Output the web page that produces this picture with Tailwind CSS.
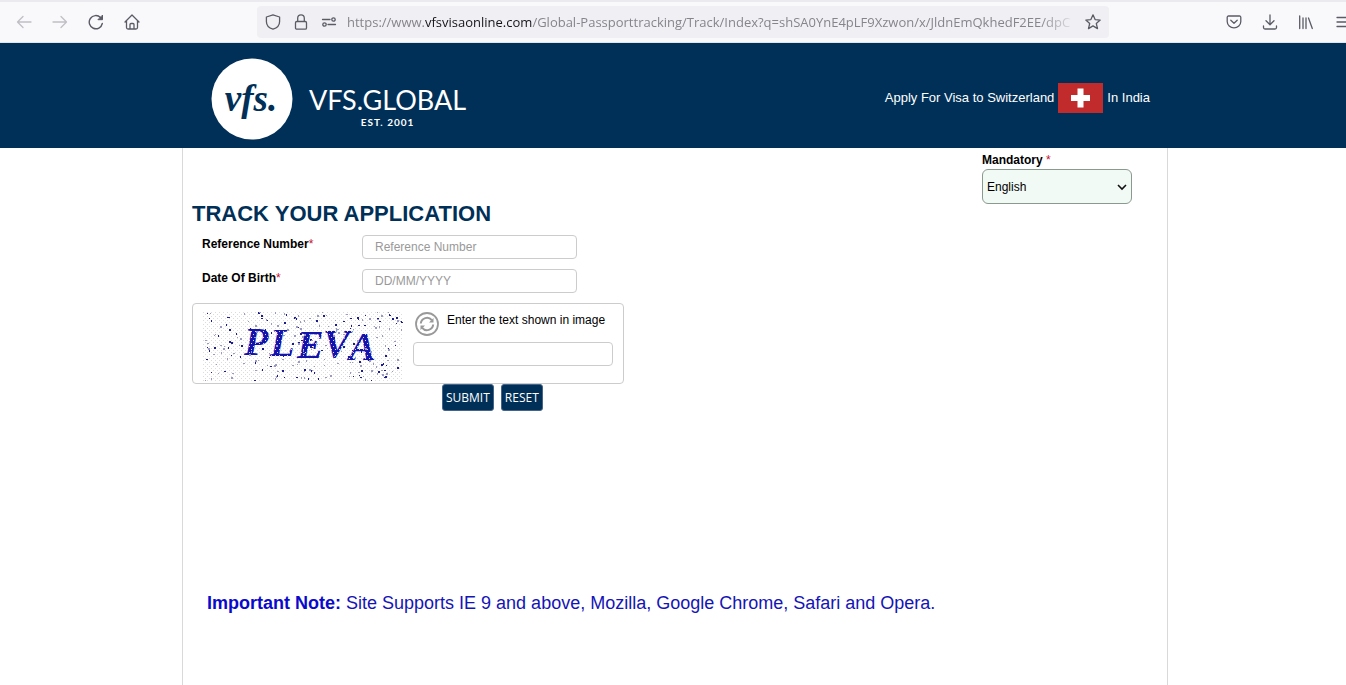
<!DOCTYPE html>
<html lang="en">
<head>
<meta charset="utf-8">
<meta name="viewport" content="width=device-width, initial-scale=1">
<title>Track Your Application</title>
<script src="https://cdn.jsdelivr.net/npm/@tailwindcss/browser@4"></script>
</head>
<body class="flex min-h-screen flex-col overflow-x-hidden bg-white font-['Liberation_Sans',Arial,sans-serif] text-xs text-black">

<nav aria-label="Browser toolbar" class="flex h-[43px] shrink-0 items-center overflow-hidden border-t-2 border-b border-t-[#ebebef] border-b-[#dfe6ee] bg-[#f9f9fb] pl-4 text-[#5b5b66]">
  <div class="flex w-[241px] shrink-0 items-center gap-5">
    <button type="button" aria-label="Back" class="text-[#bfbfc5]"><svg class="size-4" viewBox="0 0 16 16" fill="none" stroke="currentColor" stroke-width="1.3" stroke-linecap="round" stroke-linejoin="round"><path d="M15 8H1.5M7 2.5 1.5 8 7 13.500"/></svg></button>
    <button type="button" aria-label="Forward" class="text-[#bfbfc5]"><svg class="size-4" viewBox="0 0 16 16" fill="none" stroke="currentColor" stroke-width="1.3" stroke-linecap="round" stroke-linejoin="round"><path d="M1 8h13.500M9 2.500 14.500 8 9 13.500"/></svg></button>
    <button type="button" aria-label="Reload"><svg class="size-4" viewBox="0 0 16 16" fill="none" stroke="currentColor" stroke-width="1.4" stroke-linecap="round" stroke-linejoin="round"><path d="M14.300 9.500A6.600 6.600 0 1 1 12.500 3.500l1 1"/><path d="M14.500 1.500v4.200h-4.200z" fill="currentColor" stroke-width="1"/></svg></button>
    <button type="button" aria-label="Home"><svg class="size-4" viewBox="0 0 16 16" fill="none" stroke="currentColor" stroke-width="1.3" stroke-linecap="round" stroke-linejoin="round"><path d="M1 8 8 1l7 7M2.500 7v6.500a1.500 1.500 0 0 0 1.500 1.500h8a1.500 1.500 0 0 0 1.500-1.500V7M6 15v-4.500a1 1 0 0 1 1-1h2a1 1 0 0 1 1 1V15"/></svg></button>
  </div>
  <div class="flex h-8 min-w-0 grow items-center rounded bg-[#f0f0f4] px-2">
    <svg class="size-4 shrink-0" viewBox="0 0 16 16" fill="none" stroke="currentColor" stroke-width="1.3" stroke-linejoin="round"><path d="M8 .8 14.600 3v4.500c0 3.500-2.600 6.500-6.600 7.700-4-1.200-6.600-4.200-6.600-7.700V3z"/></svg>
    <svg class="ml-3 size-4 shrink-0" viewBox="0 0 16 16" fill="none" stroke="currentColor" stroke-width="1.3"><rect x="2.500" y="7.500" width="11" height="7.700" rx="1.300"/><path d="M4.700 7.500V4.200a3.300 3.300 0 0 1 6.600 0v3.300"/></svg>
    <svg class="ml-3 size-4 shrink-0" viewBox="0 0 16 16" fill="none" stroke="currentColor" stroke-width="1.300" stroke-linecap="round"><path d="M1.500 5.500H9M7 10.500h7.500"/><circle cx="12.500" cy="5.500" r="1.700"/><circle cx="3.500" cy="10.500" r="1.700"/></svg>
    <div class="ml-[10px] min-w-0 grow overflow-hidden mask-r-from-95% font-['Open_Sans','Noto_Sans',sans-serif] text-[13px] leading-5 whitespace-nowrap text-[#85858c]">https://www.<span class="text-[#15141a]">vfsvisaonline.com</span>/Global-Passporttracking/Track/Index?q=shSA0YnE4pLF9Xzwon/x/JldnEmQkhedF2EE/dpC</div>
    <button type="button" aria-label="Bookmark this page" class="ml-2 shrink-0"><svg class="size-4" viewBox="0 0 16 16" fill="none" stroke="currentColor" stroke-width="1.3" stroke-linejoin="round"><path d="m8 .8 2.100 4.800 5.100.5-3.900 3.400 1.200 5.100L8 11.900l-4.500 2.700 1.200-5.100L.8 6.100l5.100-.5z"/></svg></button>
  </div>
  <div class="-mr-1 ml-[117px] flex shrink-0 gap-5">
    <button type="button" aria-label="Save to Pocket"><svg class="size-4" viewBox="0 0 16 16" fill="none" stroke="currentColor" stroke-width="1.3" stroke-linecap="round" stroke-linejoin="round"><path d="M2.500 2h11a1.300 1.300 0 0 1 1.300 1.300V7.500a6.800 6.300 0 0 1-13.600 0V3.300A1.300 1.300 0 0 1 2.500 2zM4.800 6.300 8 9.300l3.200-3"/></svg></button>
    <button type="button" aria-label="Downloads"><svg class="size-4" viewBox="0 0 16 16" fill="none" stroke="currentColor" stroke-width="1.3" stroke-linecap="round" stroke-linejoin="round"><path d="M8 1v9.500M4 6.800l4 3.900 4-3.900M1.500 12v1.500A1.500 1.500 0 0 0 3 15h10a1.500 1.500 0 0 0 1.500-1.500V12"/></svg></button>
    <button type="button" aria-label="Library"><svg class="size-4" viewBox="0 0 16 16" fill="none" stroke="currentColor" stroke-width="1.3" stroke-linecap="round"><path d="M1.700 2v12.500M5 4v10.500M8 4v10.500M10.500 4l3.800 10.500"/></svg></button>
    <button type="button" aria-label="Menu"><svg class="size-4" viewBox="0 0 16 16" fill="none" stroke="currentColor" stroke-width="1.3" stroke-linecap="round"><path d="M3 3.500h12M3 8h12M3 12.500h12"/></svg></button>
  </div>
</nav>

<header class="h-[105px] shrink-0 bg-[#003057] pl-1 text-white">
  <div class="mx-auto flex max-w-[986px] items-start justify-between pt-[15px] pr-[18px] pl-[29px]">
    <div class="flex gap-4">
      <svg class="size-[82px]" viewBox="0 0 82 82" role="img" aria-label="vfs."><circle cx="41" cy="41" r="40.500" fill="#fff"/><text x="40" y="53" text-anchor="middle" font-family="'Liberation Serif',serif" font-style="italic" font-weight="700" font-size="37" fill="#003057">vfs.</text></svg>
      <div class="pt-[26px] text-center font-['Lato',sans-serif]">
        <div class="text-[27px] leading-8">VFS.GLOBAL</div>
        <div class="text-[10px] leading-3 font-bold tracking-widest">EST. 2001</div>
      </div>
    </div>
    <p class="flex items-center gap-1 pt-[25px] text-[13px]">
      <span>Apply For Visa to Switzerland</span>
      <svg class="h-[30px] w-[45px]" viewBox="0 0 45 30" role="img" aria-label="Flag of Switzerland"><path fill="#c22b2b" d="M0 0h45v30H0z"/><path fill="#fff" d="M19.500 5.500h6v6.500h6.500v6h-6.500v6.500h-6V18H13v-6h6.500z"/></svg>
      <span>In India</span>
    </p>
  </div>
</header>

<div class="flex grow flex-col pl-1">
<main class="mx-auto w-full max-w-[986px] grow border-x border-[#d9d9d9]">
  <div class="mr-[35px] ml-auto w-[150px] pt-1">
    <label for="lang" class="block leading-4 font-bold">Mandatory <span class="font-normal text-[#c8102e]">*</span></label>
    <div class="relative mt-px">
      <select id="lang" class="block h-[35px] w-full appearance-none rounded-md border border-[#8a9a8f] bg-[#f2faf5] pl-1"><option>English</option></select>
      <svg class="pointer-events-none absolute top-3 right-1 size-3" viewBox="0 0 12 12" fill="none" stroke="#111" stroke-width="1.600"><path d="m2 4 4 4 4-4"/></svg>
    </div>
  </div>

  <form class="pl-[9px]" onsubmit="return false">
    <h1 class="-mt-1 text-[22px] leading-7 font-bold text-[#003057]">TRACK YOUR APPLICATION</h1>
    <div class="mt-[7px] flex pl-[10px]">
      <label for="ref" class="w-40 pt-px leading-4 font-bold">Reference Number<span class="font-normal text-[#c8102e]">*</span></label>
      <input id="ref" type="text" placeholder="Reference Number" class="h-6 w-[215px] rounded border border-[#ccc] px-3 placeholder:text-[#999]">
    </div>
    <div class="mt-[10px] flex pl-[10px]">
      <label for="dob" class="w-40 pt-px leading-4 font-bold">Date Of Birth<span class="font-normal text-[#c8102e]">*</span></label>
      <input id="dob" type="text" placeholder="DD/MM/YYYY" class="h-6 w-[215px] rounded border border-[#ccc] px-3 placeholder:text-[#999]">
    </div>

    <div class="mt-[10px] flex h-[81px] w-[432px] gap-[10px] rounded border border-[#ccc] px-[10px] pt-2">
      <svg class="h-[70px] w-[200px] shrink-0" viewBox="0 0 200 70" role="img" aria-label="Captcha image">
        <defs>
          <pattern id="grain" width="4" height="4" patternUnits="userSpaceOnUse"><path fill="#dcdcdc" d="M0 0h1v1H0zM2 2h1v1H2z"/></pattern>
          <pattern id="ink" width="4" height="6" patternUnits="userSpaceOnUse"><path fill="#1414ac" d="M0 0h4v6H0z"/><path fill="#d8d8ff" d="M0 1h1v1H0zM2 4h1v1H2z"/></pattern>
        </defs>
        <path fill="url(#grain)" d="M0 0h200v70H0z"/>
        <g fill="url(#ink)" font-family="'Liberation Serif',serif" font-style="italic" font-weight="700" font-size="40">
          <text x="41" y="43">P</text><text x="67" y="44">L</text><text x="94" y="46">E</text><text x="120" y="45">V</text><text x="146" y="48">A</text>
        </g>
        <path id="specks" fill="#1c1c90"/>
        <path id="faint" fill="#9a9ac4"/>
      </svg>
      <div class="flex flex-col gap-[6px]">
        <div class="flex h-6 gap-2">
          <button type="button" aria-label="Refresh image" class="ml-0.5"><svg class="size-6" viewBox="0 0 24 24" fill="none" stroke="#999"><circle cx="12" cy="12" r="11" stroke-width="1.800"/><path stroke-width="2" d="M5.800 11.500a6.200 6.200 0 0 1 11-3.300M18.200 12.500a6.200 6.200 0 0 1-11 3.300"/><path fill="#999" stroke="none" d="M18.500 6v4.500H14zM5.500 18v-4.500H10z"/></svg></button>
          <label for="captcha" class="leading-4">Enter the text shown in image</label>
        </div>
        <input id="captcha" type="text" class="h-6 w-[200px] rounded border border-[#ccc] px-3">
      </div>
    </div>
    <div class="flex gap-[7px] pl-[250px] font-['Open_Sans','Noto_Sans',sans-serif]">
      <button type="submit" class="h-[27px] rounded-[3px] border border-[#44648a] bg-[#003057] px-[3px] pt-px font-medium text-white">SUBMIT</button>
      <button type="reset" class="h-[27px] rounded-[3px] border border-[#44648a] bg-[#003057] px-[3px] pt-px font-medium text-white">RESET</button>
    </div>
  </form>

  <p class="mt-[180px] px-6 text-lg leading-6 text-[#1414b8]"><strong class="text-[#0a0acc]">Important Note:</strong> Site Supports IE 9 and above, Mozilla, Google Chrome, Safari and Opera.</p>
</main>
</div>

<script>
  // Seeded noise, so the captcha background is the same on each load.
  let seed = 7;
  const rnd = n => (seed = (seed * 16807) % 2147483647) % n;
  const dots = (count, size) => Array.from({length: count}, () => {
    const s = 1 + rnd(size);
    return `M${rnd(199)} ${rnd(69)}h${s}v${1 + rnd(size)}h-${s}z`;
  }).join('');
  document.getElementById('specks').setAttribute('d', dots(110, 2));
  document.getElementById('faint').setAttribute('d', dots(150, 2));
</script>
</body>
</html>
